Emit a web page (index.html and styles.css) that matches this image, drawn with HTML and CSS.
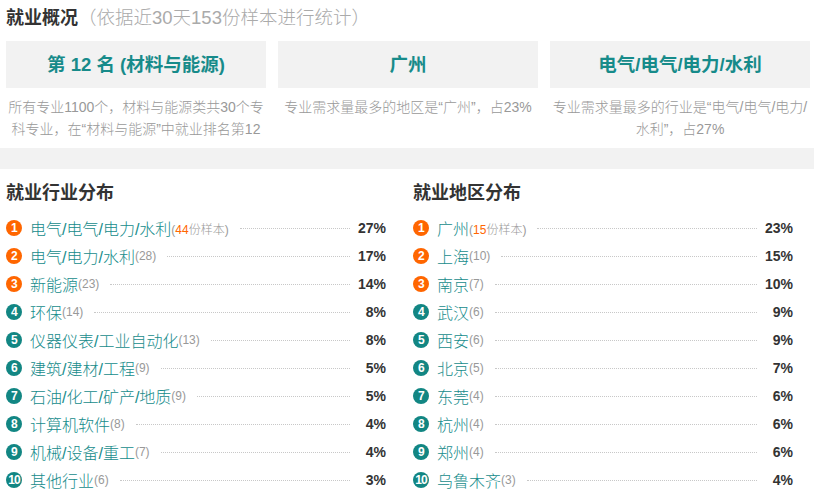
FILE: index.html
```html
<!DOCTYPE html>
<html lang="zh-CN">
<head>
<meta charset="utf-8">
<title>就业概况</title>
<link rel="stylesheet" href="styles.css">
</head>
<body>
<section class="overview">
  <h2 class="title">就业概况<span class="sub">（依据近30天153份样本进行统计）</span></h2>
  <div class="cards">
    <div class="card">
      <div class="card-head">第 12 名 (材料与能源)</div>
      <p class="card-desc">所有专业1100个，材料与能源类共30个专科专业，在“材料与能源”中就业排名第12</p>
    </div>
    <div class="card">
      <div class="card-head">广州</div>
      <p class="card-desc">专业需求量最多的地区是“广州”，占23%</p>
    </div>
    <div class="card">
      <div class="card-head">电气/电气/电力/水利</div>
      <p class="card-desc">专业需求量最多的行业是“电气/电气/电力/水利”，占27%</p>
    </div>
  </div>
</section>
<div class="band"></div>
<section class="dist">
  <div class="col">
    <h3 class="col-title">就业行业分布</h3>
    <ul class="list">
      <li class="row"><span class="badge hot">1</span><span class="name">电气/电气/电力/水利</span><span class="count">(<em>44</em>份样本)</span><span class="dots"></span><span class="pct">27%</span></li>
      <li class="row"><span class="badge hot">2</span><span class="name">电气/电力/水利</span><span class="count">(28)</span><span class="dots"></span><span class="pct">17%</span></li>
      <li class="row"><span class="badge hot">3</span><span class="name">新能源</span><span class="count">(23)</span><span class="dots"></span><span class="pct">14%</span></li>
      <li class="row"><span class="badge">4</span><span class="name">环保</span><span class="count">(14)</span><span class="dots"></span><span class="pct">8%</span></li>
      <li class="row"><span class="badge">5</span><span class="name">仪器仪表/工业自动化</span><span class="count">(13)</span><span class="dots"></span><span class="pct">8%</span></li>
      <li class="row"><span class="badge">6</span><span class="name">建筑/建材/工程</span><span class="count">(9)</span><span class="dots"></span><span class="pct">5%</span></li>
      <li class="row"><span class="badge">7</span><span class="name">石油/化工/矿产/地质</span><span class="count">(9)</span><span class="dots"></span><span class="pct">5%</span></li>
      <li class="row"><span class="badge">8</span><span class="name">计算机软件</span><span class="count">(8)</span><span class="dots"></span><span class="pct">4%</span></li>
      <li class="row"><span class="badge">9</span><span class="name">机械/设备/重工</span><span class="count">(7)</span><span class="dots"></span><span class="pct">4%</span></li>
      <li class="row"><span class="badge">10</span><span class="name">其他行业</span><span class="count">(6)</span><span class="dots"></span><span class="pct">3%</span></li>
    </ul>
  </div>
  <div class="col">
    <h3 class="col-title">就业地区分布</h3>
    <ul class="list">
      <li class="row"><span class="badge hot">1</span><span class="name">广州</span><span class="count">(<em>15</em>份样本)</span><span class="dots"></span><span class="pct">23%</span></li>
      <li class="row"><span class="badge hot">2</span><span class="name">上海</span><span class="count">(10)</span><span class="dots"></span><span class="pct">15%</span></li>
      <li class="row"><span class="badge hot">3</span><span class="name">南京</span><span class="count">(7)</span><span class="dots"></span><span class="pct">10%</span></li>
      <li class="row"><span class="badge">4</span><span class="name">武汉</span><span class="count">(6)</span><span class="dots"></span><span class="pct">9%</span></li>
      <li class="row"><span class="badge">5</span><span class="name">西安</span><span class="count">(6)</span><span class="dots"></span><span class="pct">9%</span></li>
      <li class="row"><span class="badge">6</span><span class="name">北京</span><span class="count">(5)</span><span class="dots"></span><span class="pct">7%</span></li>
      <li class="row"><span class="badge">7</span><span class="name">东莞</span><span class="count">(4)</span><span class="dots"></span><span class="pct">6%</span></li>
      <li class="row"><span class="badge">8</span><span class="name">杭州</span><span class="count">(4)</span><span class="dots"></span><span class="pct">6%</span></li>
      <li class="row"><span class="badge">9</span><span class="name">郑州</span><span class="count">(4)</span><span class="dots"></span><span class="pct">6%</span></li>
      <li class="row"><span class="badge">10</span><span class="name">乌鲁木齐</span><span class="count">(3)</span><span class="dots"></span><span class="pct">4%</span></li>
    </ul>
  </div>
</section>
</body>
</html>
```

FILE: styles.css
```css
* { box-sizing: border-box; }
html, body {
  margin: 0;
  padding: 0;
  background: #fff;
  font-family: "Liberation Sans", "Noto Sans CJK SC", sans-serif;
  color: #333;
}
.overview { padding: 6px 0 0 0; }
.title {
  margin: 0;
  padding-left: 6px;
  font-size: 18px;
  line-height: 24px;
  font-weight: bold;
  color: #333;
}
.title .sub {
  font-weight: 300;
  color: #aaa;
  font-size: 18.5px;
}
.cards {
  display: grid;
  grid-template-columns: repeat(3, 1fr);
  gap: 12px;
  padding: 0 4px 0 6px;
  margin-top: 11px;
}
.card-head {
  height: 47px;
  line-height: 47px;
  background: #f2f2f2;
  text-align: center;
  font-size: 18.5px;
  font-weight: bold;
  color: #178b8a;
}
.card-desc {
  margin: 8px 0 0 0;
  font-size: 14px;
  line-height: 22px;
  color: #999;
  font-weight: 300;
  text-align: center;
}
.band {
  height: 21px;
  background: #f2f2f2;
  margin-top: 8px;
}
.dist {
  display: grid;
  grid-template-columns: 1fr 1fr;
}
.col { padding: 0 21px 0 6px; }
.col-title {
  margin: 12px 0 9px 0;
  font-size: 18px;
  line-height: 24px;
  font-weight: bold;
  color: #333;
}
.list {
  list-style: none;
  margin: 0;
  padding: 0;
}
.row {
  display: flex;
  align-items: center;
  height: 28px;
}
.badge {
  flex: none;
  width: 16px;
  height: 16px;
  border-radius: 50%;
  background: #128683;
  color: #fff;
  font-size: 12px;
  font-weight: bold;
  line-height: 16px;
  text-align: center;
  margin-right: 8px;
  letter-spacing: -0.8px;
}
.badge.hot { background: #f60; }
.name {
  font-size: 16px;
  font-weight: 300;
  color: #168c8b;
  white-space: nowrap;
}
.count {
  font-size: 12px;
  color: #999;
  font-weight: 300;
  white-space: nowrap;
}
.count em {
  font-style: normal;
  color: #f60;
}
.dots {
  flex: 1;
  border-top: 1px dotted #c8c8c8;
  margin: 1px 0 0 11px;
}
.pct {
  flex: none;
  width: 36px;
  text-align: right;
  font-size: 14px;
  font-weight: bold;
  color: #333;
}
```
